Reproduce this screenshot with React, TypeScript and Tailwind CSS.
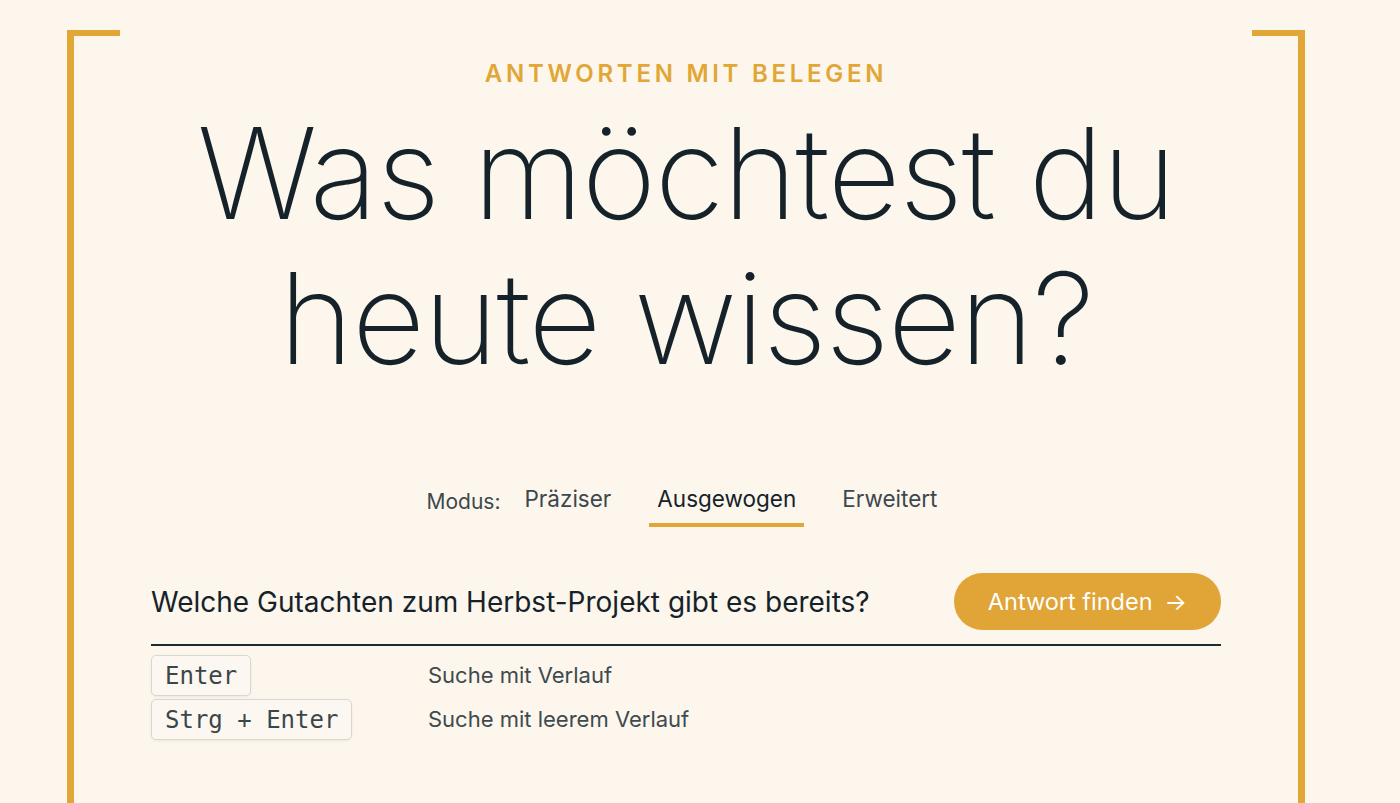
import { useState } from "react";

const modes = ["Präziser", "Ausgewogen", "Erweitert"];

const shortcuts = [
  { keys: "Enter", label: "Suche mit Verlauf" },
  { keys: "Strg + Enter", label: "Suche mit leerem Verlauf" },
];

const App = () => {
  const [mode, setMode] = useState("Ausgewogen");

  return (
    <div className="min-h-screen w-full overflow-hidden bg-[#fcf6ec] font-['Inter','Noto_Sans',sans-serif] text-[#16222a]">
      {/* Frame */}
      <div className="relative ml-[67px] mt-[30px] min-h-[800px] w-[1238px] border-x-[7px] border-[#e2a637]">
        {/* top corners */}
        <span className="absolute -left-[7px] top-0 h-[6px] w-[53px] bg-[#e2a637]" />
        <span className="absolute -right-[7px] top-0 h-[6px] w-[53px] bg-[#e2a637]" />

        <div className="mx-auto flex w-[1070px] flex-col items-center pt-[32px]">
          <p className="text-[24px] leading-[24px] font-semibold tracking-[0.155em] text-[#e2a637]">
            ANTWORTEN MIT BELEGEN
          </p>

          <h1 className="mt-[15px] text-center text-[127px] leading-[145px] font-extralight tracking-[-0.012em]">
            Was möchtest du
            <br />
            heute wissen?
          </h1>

          {/* Modus */}
          <div className="mt-[92px] flex items-start">
            <span className="mt-[5px] mr-4 text-[21px] leading-[28px] text-[#3d484e]">
              Modus:
            </span>
            <div className="flex gap-[30px]">
              {modes.map((m) => (
                <button
                  key={m}
                  onClick={() => setMode(m)}
                  className={`border-b-4 px-2 pb-2 text-[22.5px] leading-[32px] ${
                    mode === m
                      ? "border-[#e2a637] text-[#16222a]"
                      : "border-transparent text-[#3d484e]"
                  }`}
                >
                  {m}
                </button>
              ))}
            </div>
          </div>

          {/* Query */}
          <div className="mt-[46px] flex w-full items-center justify-between border-b-2 border-[#1d2a2f] pb-[14px]">
            <p className="text-[28px] leading-[36px] text-[#16222a]">
              Welche Gutachten zum Herbst-Projekt gibt es bereits?
            </p>
            <button className="flex h-[57px] items-center rounded-full bg-[#e0a437] px-[34px] text-[23.5px] text-white">
              Antwort finden
              <span className="ml-[12px]">→</span>
            </button>
          </div>

          {/* Shortcuts */}
          <div className="mt-[9px] grid w-full grid-cols-[277px_1fr] gap-y-[3px]">
            {shortcuts.map((s) => (
              <div key={s.keys} className="contents">
                <div className="flex">
                  <kbd className="flex h-[41px] items-center rounded-[5px] border border-[#dcd7cc] bg-[#fcf8f1] px-[13px] font-['DejaVu_Sans_Mono',monospace] text-[24px] text-[#3b464b] shadow-[0_1px_3px_rgba(0,0,0,0.06)]">
                    {s.keys}
                  </kbd>
                </div>
                <div className="flex items-center text-[22px] text-[#3f4a4f]">
                  {s.label}
                </div>
              </div>
            ))}
          </div>
        </div>
      </div>
    </div>
  );
};

export default App;
